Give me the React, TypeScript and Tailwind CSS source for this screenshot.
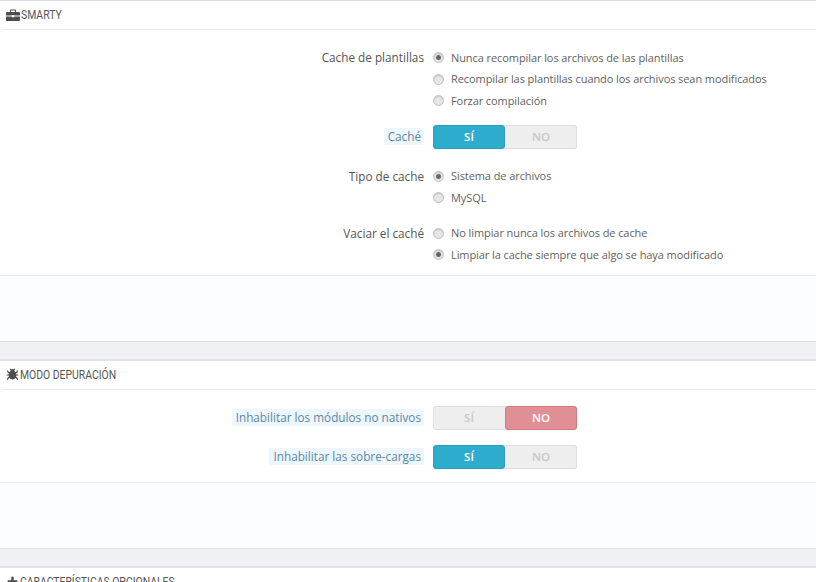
import { Bug, Plus } from "lucide-react";
import type { ReactNode } from "react";

const Radio = ({ label, checked }: { label: string; checked?: boolean }) => (
  <label className="flex h-[21.5px] items-center">
    <span className="ml-[0px] flex h-[11px] w-[11px] items-center justify-center rounded-full border border-[#c2c2c2] bg-[#e6e6e6] shadow-[inset_0_1px_1px_rgba(0,0,0,0.14)]">
      {checked && <span className="h-[5px] w-[5px] rounded-full bg-[#666666]" />}
    </span>
    <span className="ml-[7px] text-[11px] tracking-[-0.08px] text-[#5f5f5f]">{label}</span>
  </label>
);

const Toggle = ({ value }: { value: "si" | "no" }) => (
  <div className="flex h-[24px] w-[144px] rounded-[3px] bg-[#eeeeee] text-center text-[11.5px] font-semibold text-[#c7c7c7] shadow-[inset_0_0_0_1px_#e0e0e0]">
    <span
      className={
        value === "si"
          ? "w-[72px] rounded-[3px] border border-[#2a9dbd] bg-[#2eacce] leading-[22px] text-white"
          : "w-[72px] leading-[24px]"
      }
    >
      SÍ
    </span>
    <span
      className={
        value === "no"
          ? "w-[72px] rounded-[3px] border border-[#cf7b7f] bg-[#e08f95] leading-[22px] text-white"
          : "w-[72px] leading-[24px]"
      }
    >
      NO
    </span>
  </div>
);

const Row = ({ label, hint, children, className }: { label: string; hint?: boolean; children: ReactNode; className?: string }) => (
  <div className={`flex ${className ?? ""}`}>
    <div className="flex w-[424px] shrink-0 justify-end">
      {hint ? (
        <span className="h-[17px] self-center rounded-[2px] bg-[#edf7fb] pl-[4px] pr-[3px] leading-[17px] text-[#5b87a8]">{label}</span>
      ) : (
        <span className="leading-[21px] text-[#555555]">{label}</span>
      )}
    </div>
    <div className="ml-[9px]">{children}</div>
  </div>
);

const Header = ({ icon, title }: { icon: ReactNode; title: string }) => (
  <div className="ml-[2px] flex h-[29px] items-center border-b border-[#eeeeee] pl-[4px] font-['Roboto',sans-serif] text-[13px] text-[#555555]">
    {icon}
    <span className="ml-[1px] origin-left scale-x-[0.8] whitespace-nowrap">{title}</span>
  </div>
);

const Briefcase = () => (
  <svg width="14" height="12" viewBox="0 0 14 12" className="shrink-0" aria-hidden="true">
    <path fill="#4d4d4d" d="M5 0.5h4a1 1 0 0 1 1 1V3h3a1 1 0 0 1 1 1v2.6H8.2V6H5.8v.6H0V4a1 1 0 0 1 1-1h3V1.500a1 1 0 0 1 1-1zM5 1.500V3h4V1.500zM0 7.400h5.800v.8h2.400v-.8H14V11a1 1 0 0 1-1 1H1a1 1 0 0 1-1-1z" />
  </svg>
);

export default function App() {
  return (
    <div className="h-[582px] w-[816px] overflow-hidden bg-[#eff1f2] font-['Open_Sans',sans-serif] text-[11.75px]">
      <section className="border-t border-[#d8dce0] bg-white">
        <Header icon={<Briefcase />} title="SMARTY" />
        <div className="pt-[17px]">
          <Row label="Cache de plantillas">
            <Radio checked label="Nunca recompilar los archivos de las plantillas" />
            <Radio label="Recompilar las plantillas cuando los archivos sean modificados" />
            <Radio label="Forzar compilación" />
          </Row>
          <Row label="Caché" hint className="mt-[13px]">
            <Toggle value="si" />
          </Row>
          <Row label="Tipo de cache" className="mt-[17px]">
            <Radio checked label="Sistema de archivos" />
            <Radio label="MySQL" />
          </Row>
          <Row label="Vaciar el caché" className="mt-[14px]">
            <Radio label="No limpiar nunca los archivos de cache" />
            <Radio checked label="Limpiar la cache siempre que algo se haya modificado" />
          </Row>
        </div>
        <div className="mt-[9px] h-[67px] border-y border-y-[#eeeeee] border-b-[#dfe2e5] bg-[#fcfdfe]" />
      </section>

      <section className="mt-[17px] border-t-2 border-[#e0e3e6] bg-white">
        <Header icon={<Bug size={13} fill="#4d4d4d" color="#4d4d4d" className="shrink-0" />} title="MODO DEPURACIÓN" />
        <div className="pt-[16px]">
          <Row label="Inhabilitar los módulos no nativos" hint>
            <Toggle value="no" />
          </Row>
          <Row label="Inhabilitar las sobre-cargas" hint className="mt-[15px]">
            <Toggle value="si" />
          </Row>
        </div>
        <div className="mt-[13px] h-[67px] border-y border-y-[#eeeeee] border-b-[#dfe2e5] bg-[#fcfdfe]" />
      </section>

      <section className="mt-[17px] border-t-2 border-[#e0e3e6] bg-white">
        <Header icon={<Plus size={13} strokeWidth={4.5} color="#4d4d4d" className="shrink-0" />} title="CARACTERÍSTICAS OPCIONALES" />
      </section>
    </div>
  );
}
